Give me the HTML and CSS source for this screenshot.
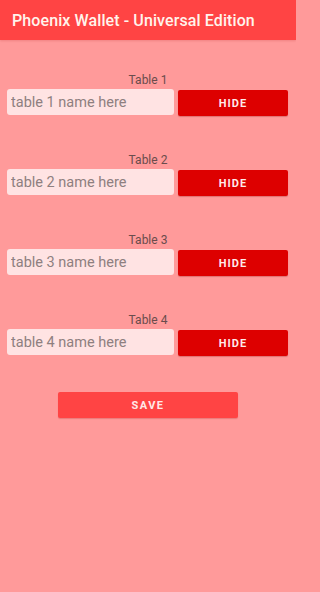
FILE: index.html
```html
<!DOCTYPE html>
<html>
<head>
<meta charset="utf-8">
<link rel="stylesheet" href="styles.css">
</head>
<body>
<header class="appbar">Phoenix Wallet - Universal Edition</header>
<main class="content">
  <section class="group">
    <div class="label">Table 1</div>
    <div class="row">
      <input class="name" type="text" placeholder="table 1 name here">
      <button class="hide">HIDE</button>
    </div>
  </section>
  <section class="group">
    <div class="label">Table 2</div>
    <div class="row">
      <input class="name" type="text" placeholder="table 2 name here">
      <button class="hide">HIDE</button>
    </div>
  </section>
  <section class="group">
    <div class="label">Table 3</div>
    <div class="row">
      <input class="name" type="text" placeholder="table 3 name here">
      <button class="hide">HIDE</button>
    </div>
  </section>
  <section class="group last">
    <div class="label">Table 4</div>
    <div class="row">
      <input class="name" type="text" placeholder="table 4 name here">
      <button class="hide">HIDE</button>
    </div>
  </section>
  <div class="save-wrap">
    <button class="save">SAVE</button>
  </div>
</main>
</body>
</html>
```
FILE: styles.css
```css
html, body {
  margin: 0;
  padding: 0;
  background: #ff9a9a;
}
body {
  width: 296px;
  height: 592px;
  font-family: Roboto, "Noto Sans", sans-serif;
  overflow: hidden;
}
.appbar {
  height: 40px;
  background: #ff4444;
  color: #fff4ec;
  font-weight: 500;
  font-size: 16px;
  line-height: 42px;
  padding-left: 12px;
  box-sizing: border-box;
  letter-spacing: 0.1px;
  box-shadow: 0 1px 2px rgba(150,0,0,0.15);
}
.content {
  display: flex;
  flex-direction: column;
  padding-top: 33px;
}
.group {
  display: flex;
  flex-direction: column;
  margin-bottom: 37px;
}
.group.last {
  margin-bottom: 36px;
}
.label {
  text-align: center;
  font-size: 12px;
  line-height: 14px;
  color: #6a4c4c;
  margin-bottom: 2px;
}
.row {
  display: flex;
  align-items: flex-start;
  padding: 0 8px 0 7px;
  gap: 4px;
}
.name {
  width: 167px;
  height: 26px;
  box-sizing: border-box;
  border: none;
  outline: none;
  border-radius: 3px;
  background: #ffe3e3;
  font-family: Roboto, "Noto Sans", sans-serif;
  font-size: 14.5px;
  padding: 0 4px;
  margin: 0;
  color: #333;
}
.name::placeholder {
  color: #8e7f7f;
}
.hide {
  width: 110px;
  height: 26px;
  margin: 1px 0 0 0;
  border: none;
  border-radius: 2px;
  background: #dd0000;
  color: #ffeaea;
  font-family: Roboto, "Noto Sans", sans-serif;
  font-weight: 700;
  font-size: 11px;
  letter-spacing: 1px;
  padding: 0;
  box-shadow: 0 1px 1px rgba(120,0,0,0.25);
}
.save-wrap {
  display: flex;
  justify-content: center;
}
.save {
  width: 180px;
  height: 26px;
  margin: 0;
  border: none;
  border-radius: 2px;
  background: #ff4444;
  color: #ffe8e8;
  font-family: Roboto, "Noto Sans", sans-serif;
  font-weight: 700;
  font-size: 11px;
  letter-spacing: 1.5px;
  padding: 0;
  box-shadow: 0 1px 1px rgba(150,0,0,0.2);
}
```
